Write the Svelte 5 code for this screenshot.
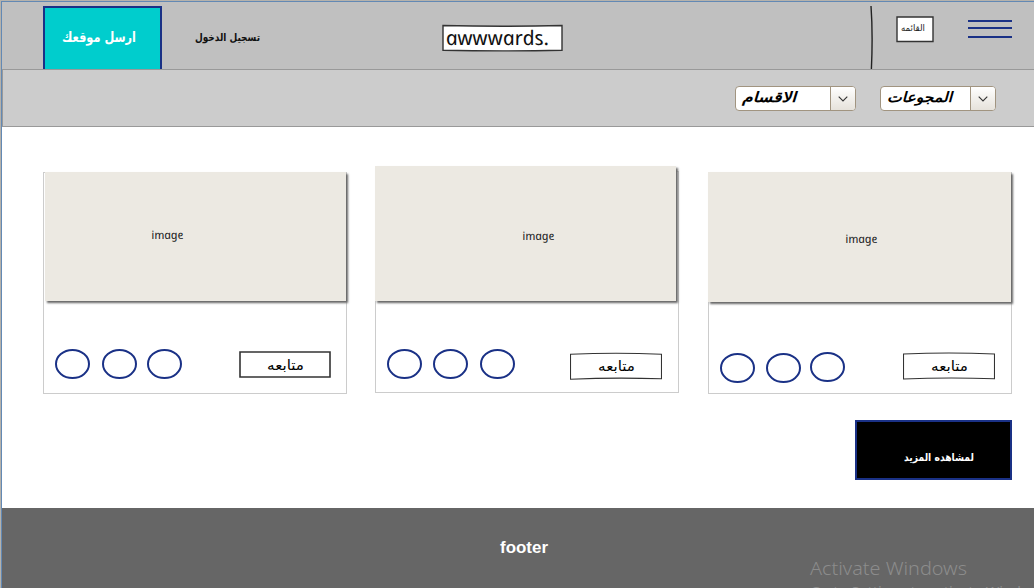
<script>
  const cards = [
    { top: 1, img: { left: 1, up: -1, w: 301, h: 129 }, cap: { x: 107, y: 67 }, circles: [0, 12, 10],
      lift: [0, 0, 0], pad: 11, rowTop: 176, btnTop: 2, btnLeft: 57, btn: 'M1 1H91V26H1Z', thick: 1.6 },
    { top: 0, img: { left: -1, up: -6, w: 301, h: 135 }, cap: { x: 148, y: 74 }, circles: [0, 11, 12],
      lift: [0, 0, 0], pad: 11, rowTop: 177, btnTop: 3, btnLeft: 55, btn: 'M.5 2.2Q46 .2 91.5 2.2V26.8Q46 25.2 .5 27.2Z', thick: 1.1 },
    { top: 1, img: { left: -1, up: -1, w: 303, h: 130 }, cap: { x: 138, y: 71 }, circles: [0, 11, 9],
      lift: [1, 1, 0], pad: 11, rowTop: 179, btnTop: 0, btnLeft: 58, btn: 'M.5 2Q46 0 91.5 2V26.8Q46 25 .5 27Z', thick: 1.1 }
  ];
  const selects = [
    { text: 'الاقسام', w: 121, box: 94, tw: 54 },
    { text: 'المجوعات', w: 116, box: 89, tw: 65 }
  ];
</script>

{#snippet label(text, w, h, base, cls)}
  <svg class="label" width={w} height={h}>
    <text class={cls} x="0" y={base} textLength={w} lengthAdjust="spacingAndGlyphs">{text}</text>
  </svg>
{/snippet}

{#snippet comic(text, w, h, base, cls)}
  <svg class="label" width={w} height={h}>
    <g transform="translate(0 {base}) skewX(12)">
      <text class={cls} x="0" y="0" textLength={w} lengthAdjust="spacingAndGlyphs">{text}</text>
    </g>
  </svg>
{/snippet}

<div class="page">
  <header>
    <button class="submit">{@render label('ارسل موقعك', 74, 24, 15, 'ar submit-text')}</button>
    <a class="login" href="#login">{@render label('تسجيل الدخول', 65, 20, 13, 'ar login-text')}</a>
    <div class="logo">
      <svg class="sketch" width="122" height="28"><path d="M1 1.5Q61 3 120 1.5V26.2Q61 27.6 1 26.2Z" /></svg>
      {@render comic('awwwards.', 103, 26, 20, 'comic logo-text')}
    </div>
    <svg class="divider" width="4" height="64"><path d="M1 0Q3 28 1.4 63" /></svg>
    <div class="menu">
      <svg class="sketch" width="38" height="28"><path d="M1 2H37V26.5H1Z" /></svg>
      {@render label('القائمه', 24, 18, 11, 'ar menu-text')}
    </div>
    <div class="burger"><i></i><i></i><i></i></div>
  </header>

  <nav>
    {#each selects as s}
      <div class="select" style:width="{s.w}px">
        <div class="value" style:width="{s.box}px">{@render label(s.text, s.tw, 23, 15, 'ar select-text')}</div>
        <div class="arrow"><svg width="10" height="6"><path d="M.7 .7L5 5L9.3 .7" /></svg></div>
      </div>
    {/each}
  </nav>

  <main>
    <div class="cards">
      {#each cards as c}
        <article style:margin-top="{c.top}px">
          <div class="image" style:width="{c.img.w}px" style:height="{c.img.h}px" style:margin="{c.img.up}px 0 0 {c.img.left}px"
            style:padding="{c.cap.y - 13}px 0 0 {c.cap.x}px">
            {@render comic('image', 32, 18, 13, 'comic image-text')}
          </div>
          <div class="row" style:margin-top="{c.rowTop - c.img.h - c.img.up}px" style:padding-left="{c.pad}px">
            {#each c.circles as gap, i}
              <svg class="circle" width="35" height="30" style:margin="{c.lift[i]}px 0 0 {gap}px"><ellipse cx="17.5" cy="15" rx="16.5" ry="14" /></svg>
            {/each}
            <button class="follow" style:margin="{c.btnTop}px 0 0 {c.btnLeft}px">
              <svg class="sketch" width="92" height="28"><path d={c.btn} style:stroke-width={c.thick} /></svg>
              {@render label('متابعه', 37, 22, 14, 'ar follow-text')}
            </button>
          </div>
        </article>
      {/each}
    </div>
    <button class="more">{@render label('لمشاهده المزيد', 70, 20, 13, 'ar more-text')}</button>
  </main>

  <footer>
    {@render label('footer', 48, 20, 15, 'footer-text')}
    <div class="watermark">
      {@render label('Activate Windows', 157, 26, 20, 'win win-title')}
      {@render label('Go to Settings to activate Windows.', 242, 20, 16, 'win win-sub')}
    </div>
  </footer>
</div>

<style>
  :global(body) { margin: 0; background: #fff; }
  * { box-sizing: border-box; }
  button { border: 0; background: none; padding: 0; margin: 0; }
  .page {
    width: 1034px; height: 588px; overflow: hidden; display: flex; flex-direction: column;
    border-top: 1px solid #b5b2ac; border-left: 1px solid #b5b2ac; background: #fff;
    font-family: "Liberation Sans", Arial, sans-serif;
  }
  .label { display: block; overflow: visible; flex: none; }
  .ar { font-family: "DejaVu Sans", sans-serif; fill: #000; }
  .comic { font-family: "Comic Sans MS", "Noto Sans", sans-serif; font-style: italic; fill: #111; }
  .submit-text { font-size: 14px; font-weight: bold; fill: #fff; }
  .login-text { font-size: 11px; font-weight: bold; fill: #111; }
  .logo-text { font-size: 20px; }
  .menu-text { font-size: 9px; fill: #222; }
  .select-text { font-size: 14px; font-weight: bold; font-style: italic; }
  .image-text { font-size: 11.5px; fill: #222; }
  .follow-text { font-size: 14px; }
  .more-text { font-size: 11px; font-weight: bold; fill: #fff; }
  .footer-text { font-size: 16.5px; font-weight: bold; fill: #fff; }

  header {
    height: 68px; flex: none; display: flex; align-items: flex-start;
    background: #c0c0c0; border-top: 1px solid #6389b4; border-left: 1px solid #6389b4;
  }
  .submit {
    margin: 4px 0 0 41px; width: 119px; height: 63px; flex: none; padding: 19px 0 0 17px;
    background: #00cdcd; border: 2px solid #1a3186; border-bottom: 0; display: flex; align-items: flex-start;
  }
  .login { margin: 26px 0 0 33px; display: block; flex: none; }
  .logo { position: relative; margin: 22px 0 0 182px; width: 122px; height: 28px; flex: none; padding: 1px 0 0 5px; }
  .sketch { position: absolute; left: 0; top: 0; }
  .sketch path { fill: #fff; stroke: #333; stroke-width: 1.4; }
  .sketch + .label { position: relative; }
  .divider { margin: 4px 0 0 306px; flex: none; }
  .divider path { fill: none; stroke: #222; stroke-width: 1.4; }
  .menu { position: relative; margin: 13px 0 0 22px; width: 38px; height: 28px; flex: none; padding: 5px 0 0 5px; }
  .burger { margin: 18px 0 0 34px; width: 44px; height: 18px; flex: none; display: flex; flex-direction: column; }
  .burger i { height: 2px; background: #1a3186; }
  .burger i:nth-child(2) { margin: 5px 0 7px; }

  nav {
    height: 58px; flex: none; display: flex; gap: 24px; padding: 17px 0 0 733px;
    background: #ccc; border-left: 1px solid #6389b4; box-shadow: inset 1px 1px #999, inset 0 -1px #999;
  }
  .select {
    height: 25px; display: flex; border: 1px solid #a19480; border-radius: 4px; overflow: hidden; background: #fff; flex: none;
  }
  .value { padding: 0 0 0 6px; flex: none; }
  .arrow {
    flex: 1; display: flex; align-items: center; justify-content: center;
    border-left: 1px solid #a19480; background: linear-gradient(#fff, #f2f0ec 50%, #e6e2db);
  }
  .arrow path { fill: none; stroke: #333; stroke-width: 1.1; }

  main { height: 381px; flex: none; border-left: 1px solid #6389b4; display: flex; flex-direction: column; padding: 44px 22px 0 41px; }
  .cards { display: grid; grid-template-columns: 332px 333px 304px; height: 249px; align-items: start; flex: none; }
  article { width: 304px; height: 222px; border: 1px solid #ccc; display: flex; flex-direction: column; }
  .image { background: #ece9e2; box-shadow: 2px 2px 2px #666; flex: none; position: relative; }
  .row { display: flex; align-items: flex-start; }
  .circle { flex: none; display: block; }
  .circle ellipse { fill: #fff; stroke: #1a3186; stroke-width: 2; }
  .follow { position: relative; width: 92px; height: 28px; flex: none; padding: 3px 0 0 28px; }
  .more {
    align-self: flex-end; width: 157px; height: 60px; flex: none; background: #000; border: 2px solid #1a3186;
    padding: 26px 0 0 47px; display: flex; align-items: flex-start;
  }

  footer {
    height: 80px; flex: none; background: #666; border-left: 1px solid #6389b4;
    display: flex; align-items: flex-start; overflow: hidden; padding: 30px 0 0 498px;
  }
  .watermark { margin: 17px 0 0 262px; flex: none; }
  .win { font-family: "Noto Sans", "Open Sans", sans-serif; fill: #8c8c8c; }
  .win-title { font-size: 19px; font-weight: 300; }
  .win-sub { font-size: 14px; }
</style>
